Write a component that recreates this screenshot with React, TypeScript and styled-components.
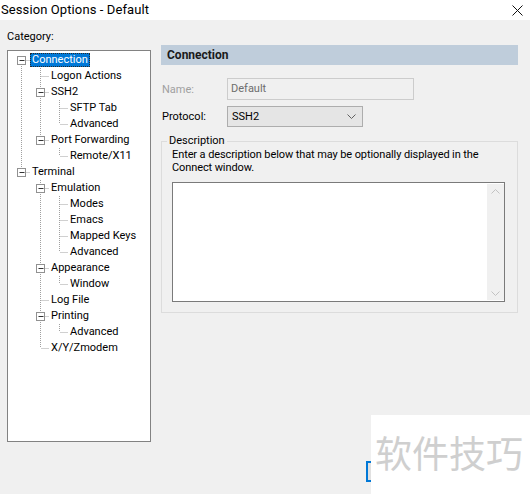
import React from 'react';
import styled, { createGlobalStyle } from 'styled-components';

const GlobalStyle = createGlobalStyle`
  html, body {
    margin: 0;
    padding: 0;
    background: #f0f0f0;
    overflow: hidden;
  }
  body {
    font-family: Roboto, "Noto Sans", "Liberation Sans", sans-serif;
    font-size: 11px;
    color: #000;
  }
`;

const Window = styled.div`
  position: relative;
  width: 530px;
  height: 494px;
  background: #f0f0f0;
  overflow: hidden;
`;

const TitleBar = styled.div`
  display: flex;
  align-items: center;
  box-sizing: border-box;
  width: 530px;
  height: 20px;
  background: #fff;
  padding: 0 7px 0 1px;
`;

const Title = styled.span`
  flex: 1;
  font-size: 13px;
  line-height: 16px;
  margin-top: -1px;
  letter-spacing: 0.1px;
`;

const CloseIcon = styled.svg`
  flex-shrink: 0;
  display: block;
`;

const Body = styled.div`
  display: flex;
  padding-left: 7px;
`;

const LeftCol = styled.div`
  display: flex;
  flex-direction: column;
  padding-top: 9px;
`;

const CategoryLabel = styled.div`
  line-height: 16px;
  margin-bottom: 5px;
`;

const TreeBox = styled.div`
  box-sizing: border-box;
  width: 144px;
  height: 392px;
  background: #fff;
  border: 1px solid #828282;
  padding: 1px 0 0 3px;
`;

const TreeRow = styled.div`
  display: flex;
  align-items: center;
  height: 16px;
`;

const TreeLabel = styled.span<{ $selected?: boolean }>`
  padding: 0 2px;
  line-height: 14px;
  height: 14px;
  white-space: nowrap;
  background: ${p => (p.$selected ? '#0078d7' : 'transparent')};
  color: ${p => (p.$selected ? '#fff' : '#000')};
  outline: ${p => (p.$selected ? '1px dotted #2a2a2a' : 'none')};
  outline-offset: -1px;
`;

const RightCol = styled.div`
  display: flex;
  flex-direction: column;
  width: 357px;
  margin: 25px 0 0 10px;
`;

const SectionHeader = styled.div`
  height: 20px;
  line-height: 20px;
  background: #bfcddb;
  padding-left: 6px;
  font-size: 12px;
  font-weight: 700;
  color: #1a1a1a;
`;

const FieldRow = styled.div<{ $top: number }>`
  display: flex;
  align-items: center;
  margin-top: ${p => p.$top}px;
`;

const FieldLabel = styled.span<{ $disabled?: boolean }>`
  width: 65px;
  padding-left: 1px;
  color: ${p => (p.$disabled ? '#a0a0a0' : '#000')};
`;

const TextInput = styled.div`
  box-sizing: border-box;
  width: 187px;
  height: 22px;
  border: 1px solid #cccccc;
  background: #f0f0f0;
  color: #6d6d6d;
  padding-left: 3px;
  line-height: 20px;
`;

const Combo = styled.div`
  box-sizing: border-box;
  display: flex;
  align-items: center;
  justify-content: space-between;
  width: 136px;
  height: 21px;
  border: 1px solid #adadad;
  background: #e5e5e5;
  padding: 0 6px 0 4px;
`;

const GroupBox = styled.fieldset`
  box-sizing: border-box;
  width: 357px;
  margin: 7px 0 0 0;
  padding: 0 12px 10px 10px;
  border: 1px solid #dcdcdc;
`;

const GroupLegend = styled.legend`
  padding: 0 2px;
  margin-left: -5px;
  line-height: 14px;
`;

const Hint = styled.div`
  line-height: 13px;
  letter-spacing: -0.1px;
`;

const TextBox = styled.div`
  display: flex;
  box-sizing: border-box;
  width: 333px;
  height: 120px;
  margin-top: 8px;
  border: 1px solid #7a7a7a;
  background: #fff;
`;

const TextArea = styled.div`
  flex: 1;
`;

const ScrollBar = styled.div`
  display: flex;
  flex-direction: column;
  justify-content: space-between;
  align-items: center;
  width: 17px;
  margin: 1px 0 1px 0;
  padding: 5px 0 4px;
  background: #f0f0f0;
`;

const ButtonRow = styled.div`
  display: flex;
  padding: 19px 0 0 366px;
`;

const DialogButton = styled.div`
  box-sizing: border-box;
  width: 75px;
  height: 21px;
  border: 2px solid #0078d7;
  background: #e1e1e1;
`;

const Watermark = styled.div`
  position: absolute;
  right: 0;
  bottom: 0;
  width: 159px;
  height: 79px;
  background: #fff;
  box-sizing: border-box;
  padding: 15px 0 0 4px;
  font-family: "Noto Sans CJK SC", sans-serif;
  font-size: 37px;
  line-height: 44px;
  color: #cfcfcf;
  white-space: nowrap;
`;

type Node = { label: string; selected?: boolean; children?: Node[] };

type Flat = {
  label: string;
  level: number;
  hasChildren: boolean;
  first: boolean;
  last: boolean;
  cont: boolean[];
  selected?: boolean;
};

const tree: Node[] = [
  {
    label: 'Connection',
    selected: true,
    children: [
      { label: 'Logon Actions' },
      { label: 'SSH2', children: [{ label: 'SFTP Tab' }, { label: 'Advanced' }] },
      { label: 'Port Forwarding', children: [{ label: 'Remote/X11' }] },
    ],
  },
  {
    label: 'Terminal',
    children: [
      {
        label: 'Emulation',
        children: [{ label: 'Modes' }, { label: 'Emacs' }, { label: 'Mapped Keys' }, { label: 'Advanced' }],
      },
      { label: 'Appearance', children: [{ label: 'Window' }] },
      { label: 'Log File' },
      { label: 'Printing', children: [{ label: 'Advanced' }] },
      { label: 'X/Y/Zmodem' },
    ],
  },
];

const flatten = (nodes: Node[], level: number, cont: boolean[], out: Flat[]) => {
  nodes.forEach((n, i) => {
    const last = i === nodes.length - 1;
    out.push({
      label: n.label,
      level,
      hasChildren: !!n.children,
      first: level === 0 && i === 0,
      last,
      cont,
      selected: n.selected,
    });
    if (n.children) flatten(n.children, level + 1, [...cont, !last], out);
  });
  return out;
};

const rows = flatten(tree, 0, [], []);

const COL = 19;
const LINE = '#a0a0a0';

// dotted connector lines and the +/- box for one tree row
const Guides: React.FC<{ row: Flat }> = ({ row }) => {
  const w = (row.level + 1) * COL;
  const x0 = row.level * COL + 10.5;
  return (
    <svg width={w} height={16} style={{ flexShrink: 0 }}>
      {row.cont.map((c, i) =>
        c ? (
          <line key={i} x1={i * COL + 10.5} y1={0} x2={i * COL + 10.5} y2={16} stroke={LINE} strokeDasharray="1 1" />
        ) : null
      )}
      <line x1={x0} y1={row.first ? 8 : 0} x2={x0} y2={row.last ? 8 : 16} stroke={LINE} strokeDasharray="1 1" />
      <line x1={x0 + 1} y1={8.5} x2={w} y2={8.5} stroke={LINE} strokeDasharray="1 1" />
      {row.hasChildren && (
        <g>
          <rect x={x0 - 4} y={4.5} width={8} height={8} fill="#fff" stroke="#919191" />
          <line x1={x0 - 2} y1={8.5} x2={x0 + 3} y2={8.5} stroke="#333" />
        </g>
      )}
    </svg>
  );
};

const Chevron: React.FC<{ up?: boolean; color: string }> = ({ up, color }) => (
  <svg width={9} height={5} viewBox="0 0 9 5">
    <path d={up ? 'M0.5 4.5 L4.5 0.5 L8.5 4.5' : 'M0.5 0.5 L4.5 4.5 L8.5 0.5'} fill="none" stroke={color} strokeWidth={1} />
  </svg>
);

const App: React.FC = () => {
  return (
    <Window>
      <GlobalStyle />
      <TitleBar>
        <Title>Session Options - Default</Title>
        <CloseIcon width={11} height={11} viewBox="0 0 11 11">
          <path d="M0.5 0.5 L10.5 10.5 M10.5 0.5 L0.5 10.5" stroke="#111" strokeWidth={1} />
        </CloseIcon>
      </TitleBar>
      <Body>
        <LeftCol>
          <CategoryLabel>Category:</CategoryLabel>
          <TreeBox>
            {rows.map((r, i) => (
              <TreeRow key={i}>
                <Guides row={r} />
                <TreeLabel $selected={r.selected}>{r.label}</TreeLabel>
              </TreeRow>
            ))}
          </TreeBox>
        </LeftCol>
        <RightCol>
          <SectionHeader>Connection</SectionHeader>
          <FieldRow $top={13}>
            <FieldLabel $disabled>Name:</FieldLabel>
            <TextInput>Default</TextInput>
          </FieldRow>
          <FieldRow $top={6}>
            <FieldLabel>Protocol:</FieldLabel>
            <Combo>
              <span>SSH2</span>
              <Chevron color="#606060" />
            </Combo>
          </FieldRow>
          <GroupBox>
            <GroupLegend>Description</GroupLegend>
            <Hint>
              Enter a description below that may be optionally displayed in the
              <br />
              Connect window.
            </Hint>
            <TextBox>
              <TextArea />
              <ScrollBar>
                <Chevron up color="#c2c2c2" />
                <Chevron color="#c2c2c2" />
              </ScrollBar>
            </TextBox>
          </GroupBox>
        </RightCol>
      </Body>
      <ButtonRow>
        <DialogButton />
      </ButtonRow>
      <Watermark>软件技巧</Watermark>
    </Window>
  );
};

export default App;
